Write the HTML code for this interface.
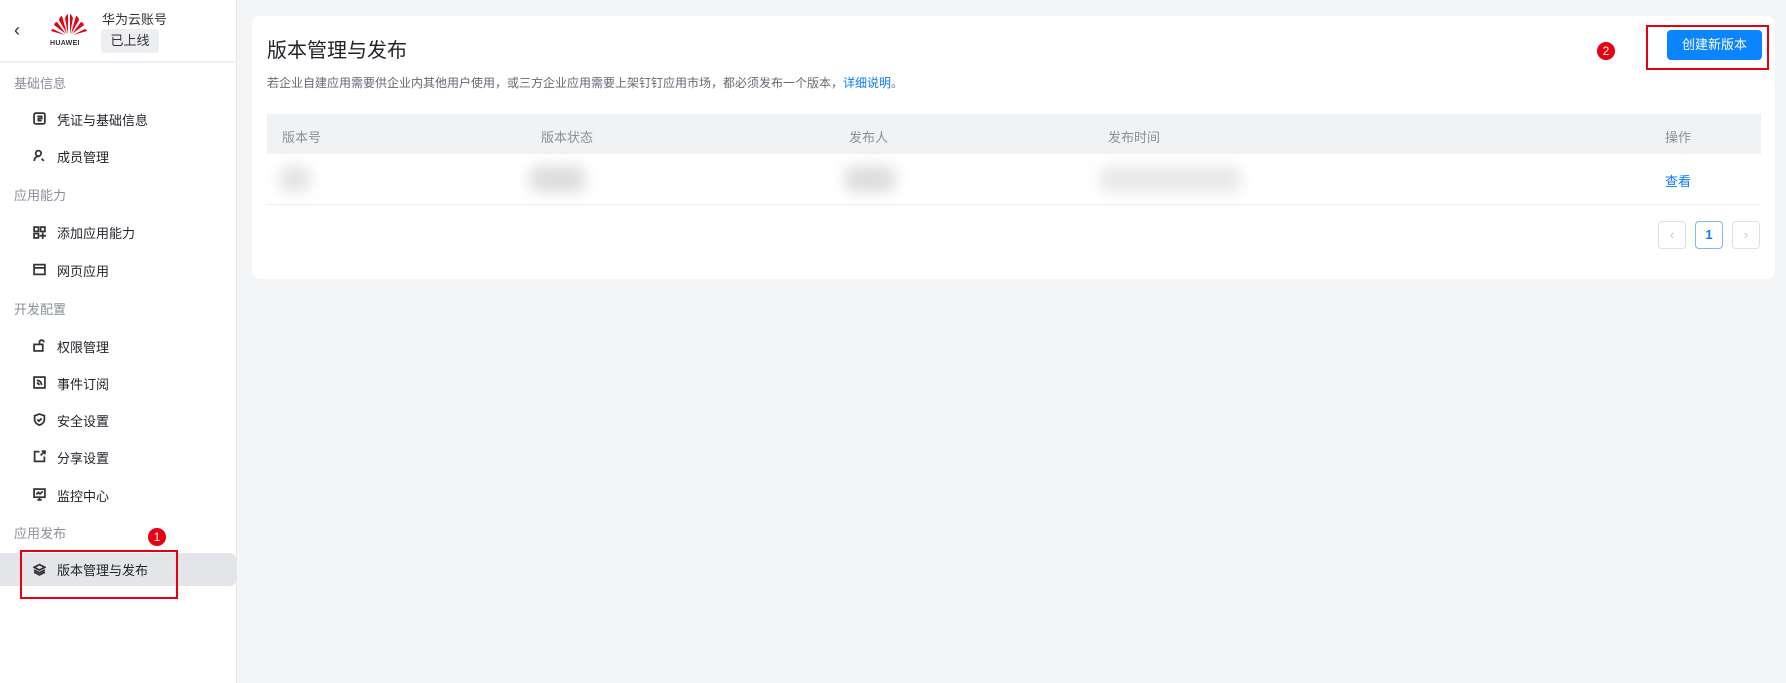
<!DOCTYPE html>
<html><head><meta charset="utf-8"><style>
*{margin:0;padding:0;box-sizing:border-box}
body{width:1786px;height:683px;background:#f4f5f7;font-family:"Liberation Sans","Noto Sans CJK SC",sans-serif;position:relative;overflow:hidden;color:#1f2329}
.a{position:absolute}
.side{left:0;top:0;width:237px;height:683px;background:#fff;border-right:1px solid #e5e6e8}
.grp{position:absolute;left:14px;font-size:13px;color:#8a8f99}
.it{position:absolute;left:57px;font-size:13px;color:#1f2329}
.ic{position:absolute;left:33px;width:13px;height:13px}
.ic *{stroke-width:1.6}
.card{left:252px;top:16px;width:1523px;height:263px;background:#fff;border-radius:8px}
.th{position:absolute;font-size:13px;color:#8a8f99;top:127px}
.blur{position:absolute;background:#ddd;filter:blur(7px);border-radius:6px}
.pg{position:absolute;top:221px;width:28px;height:28px;border:1px solid #dcdfe4;border-radius:4px;font-size:13px;text-align:center;line-height:26px;color:#c0c4cc}
.badge{position:absolute;width:18px;height:18px;border-radius:50%;background:#e60012;color:#fff;font-size:12px;text-align:center;line-height:18px}
</style></head><body>
<div class="a side">
  <div class="a" style="left:14px;top:20px;font-size:18px;color:#333">&#8249;</div>
  <svg class="a" style="left:50px;top:12px" width="38" height="26" viewBox="0 0 38 26">
   <g fill="#e60012">
    <path d="M18 22 L15 6 Q17 2 18 2Z"/><path d="M20 22 L23 6 Q21 2 20 2Z"/>
    <path d="M17 22 L9 8 Q10 4 12 4Z"/><path d="M21 22 L29 8 Q28 4 26 4Z"/>
    <path d="M16 22 L4 13 Q5 10 7 10Z"/><path d="M22 22 L34 13 Q33 10 31 10Z"/>
    <path d="M15 23 L1 19 Q2 17 3 17Z"/><path d="M23 23 L37 19 Q36 17 35 17Z"/>
   </g></svg>
  <div class="a" style="left:50px;top:40px;font-size:7px;font-weight:bold;color:#333;letter-spacing:0.3px">HUAWEI</div>
  <div class="a" style="left:102px;top:9px;font-size:13px;color:#333">华为云账号</div>
  <div class="a" style="left:101px;top:29px;width:58px;height:24px;background:#eceef1;border-radius:4px;font-size:13px;text-align:center;line-height:24px;color:#333">已上线</div>
  <div class="a" style="left:0;top:61px;width:237px;height:2px;background:#eceef1"></div>
  <div class="grp" style="top:73px">基础信息</div>
  <svg class="ic" style="top:112px" viewBox="0 0 12 12"><rect x="1" y="1" width="10" height="10" rx="1.5" fill="none" stroke="#333"/><path d="M4 4h4v2H5v2h3" fill="none" stroke="#333"/></svg><div class="it" style="top:110px">凭证与基础信息</div>
  <svg class="ic" style="top:149px" viewBox="0 0 12 12"><circle cx="5" cy="4" r="2.5" fill="none" stroke="#333"/><path d="M1 11q1-5 5-4M8 9l2 2" fill="none" stroke="#333"/></svg><div class="it" style="top:147px">成员管理</div>
  <div class="grp" style="top:185px">应用能力</div>
  <svg class="ic" style="top:226px" viewBox="0 0 12 12"><g fill="none" stroke="#333"><rect x="1" y="1" width="4" height="4"/><rect x="7" y="1" width="4" height="4"/><rect x="1" y="7" width="4" height="4"/><path d="M9 6v6M6 9h6"/></g></svg><div class="it" style="top:223px">添加应用能力</div>
  <svg class="ic" style="top:263px" viewBox="0 0 12 12"><rect x="1" y="1.5" width="10" height="9" fill="none" stroke="#333"/><path d="M1 4.5h10" stroke="#333"/></svg><div class="it" style="top:261px">网页应用</div>
  <div class="grp" style="top:299px">开发配置</div>
  <svg class="ic" style="top:339px" viewBox="0 0 12 12"><rect x="1" y="5" width="8" height="6" fill="none" stroke="#333"/><path d="M6 5V3q0-2 2-2t2 2" fill="none" stroke="#333"/></svg><div class="it" style="top:337px">权限管理</div>
  <svg class="ic" style="top:376px" viewBox="0 0 12 12"><rect x="1" y="1" width="10" height="10" fill="none" stroke="#333"/><path d="M3.5 4q4 0 4.5 4.5M3.5 6.5q2 0 2 2" fill="none" stroke="#333"/></svg><div class="it" style="top:374px">事件订阅</div>
  <svg class="ic" style="top:413px" viewBox="0 0 12 12"><path d="M6 1l4.5 1.5v4Q10 10 6 11.2Q2 10 1.5 6.5v-4z M4 6l1.5 1.5L8 5" fill="none" stroke="#333"/></svg><div class="it" style="top:411px">安全设置</div>
  <svg class="ic" style="top:450px" viewBox="0 0 12 12"><path d="M6 1.5H1.5v9h9V6M7 5l4-4M8 1h3v3" fill="none" stroke="#333"/></svg><div class="it" style="top:448px">分享设置</div>
  <svg class="ic" style="top:488px" viewBox="0 0 12 12"><rect x="1" y="1" width="10" height="7.5" fill="none" stroke="#333"/><path d="M3 6l2-2 1.5 1.5L9 3M4 11h4M6 8.5V11" fill="none" stroke="#333"/></svg><div class="it" style="top:486px">监控中心</div>
  <div class="grp" style="top:523px">应用发布</div>
  <div class="a" style="left:0;top:553px;width:236px;height:33px;background:#e4e5e8;border-radius:0 6px 6px 0"></div>
  <svg class="ic" style="top:563px" viewBox="0 0 12 12"><path d="M6 1.5L11 4 6 6.5 1 4z M1 6.5L6 9l5-2.5 M1 8.5L6 11l5-2.5" fill="none" stroke="#333"/></svg><div class="it" style="top:560px">版本管理与发布</div>
  <div class="a" style="left:20px;top:550px;width:158px;height:49px;border:2px solid #e60012"></div>
  <div class="badge" style="left:148px;top:528px">1</div>
</div>
<div class="a card"></div>
<div class="a" style="left:267px;top:34px;font-size:20px;color:#1f2329">版本管理与发布</div>
<div class="a" style="left:267px;top:74px;font-size:12px;color:#646a73">若企业自建应用需要供企业内其他用户使用，或三方企业应用需要上架钉钉应用市场，都必须发布一个版本，<span style="color:#0a7cff">详细说明</span>。</div>
<div class="a" style="left:1667px;top:30px;width:95px;height:30px;background:#0a84ff;border-radius:4px;color:#fff;font-size:13px;text-align:center;line-height:30px">创建新版本</div>
<div class="a" style="left:1646px;top:25px;width:123px;height:45px;border:2px solid #e60012"></div>
<div class="badge" style="left:1597px;top:42px">2</div>
<div class="a" style="left:267px;top:114px;width:1494px;height:40px;background:#f1f2f4"></div>
<div class="th" style="left:282px">版本号</div>
<div class="th" style="left:541px">版本状态</div>
<div class="th" style="left:849px">发布人</div>
<div class="th" style="left:1108px">发布时间</div>
<div class="th" style="left:1665px">操作</div>
<div class="blur" style="left:280px;top:166px;width:30px;height:26px;background:#e4e4e4"></div>
<div class="blur" style="left:530px;top:166px;width:55px;height:26px"></div>
<div class="blur" style="left:845px;top:166px;width:50px;height:26px"></div>
<div class="blur" style="left:1100px;top:166px;width:140px;height:26px;background:#e8e8e8"></div>
<div class="a" style="left:1665px;top:171px;font-size:13px;color:#0a7cff">查看</div>
<div class="a" style="left:267px;top:204px;width:1494px;height:1px;background:#eceef1"></div>
<div class="pg" style="left:1658px">&#8249;</div>
<div class="pg" style="left:1695px;border-color:#7fb8ff;color:#0a7cff;font-weight:bold">1</div>
<div class="pg" style="left:1732px">&#8250;</div>
</body></html>
